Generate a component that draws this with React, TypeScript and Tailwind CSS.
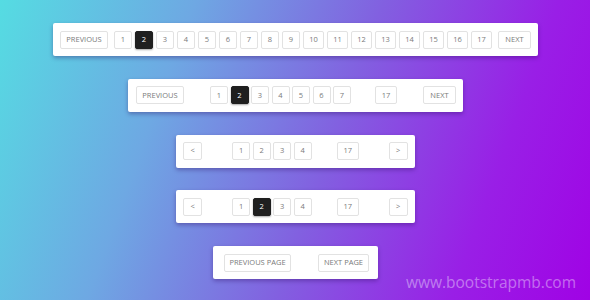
import React from 'react';

const font = { fontFamily: '"Open Sans", "Liberation Sans", sans-serif' };

function PageBtn({ label, active = false, w }: { label: string; active?: boolean; w: string }) {
  return (
    <button
      className={
        'h-[18px] shrink-0 flex items-center justify-center rounded-[2px] border text-[7.5px] leading-none ' +
        w +
        (active
          ? ' bg-[#1f1f1f] border-[#1f1f1f] text-white shadow-[0_1px_2px_rgba(0,0,0,0.35)]'
          : ' bg-white border-[#e2e2e2] text-[#7a7a7a]')
      }
    >
      {label}
    </button>
  );
}

function Card({ children, className = '' }: { children: React.ReactNode; className?: string }) {
  return (
    <div className={'h-[33px] flex items-center bg-white rounded-[2px] shadow-[0_2px_4px_rgba(40,0,90,0.35)] ' + className}>
      {children}
    </div>
  );
}

function num(n: number, active: number) {
  return <PageBtn key={n} label={String(n)} active={n === active} w={n > 9 ? 'w-[21px]' : 'w-[18px]'} />;
}

export default function App() {
  const all = Array.from({ length: 17 }, (_, i) => i + 1);

  return (
    <div
      className="relative w-[590px] h-[300px] overflow-hidden bg-[linear-gradient(110deg,#55dce2_0%,#6ea8e3_28%,#8260e0_55%,#991fe6_80%,#a002e5_100%)]"
      style={font}
    >
      <div className="flex flex-col items-center pt-[23px] pl-[1px] gap-[22.75px]">
        {/* full list */}
        <Card className="px-[7px]">
          <PageBtn label="PREVIOUS" w="w-[48px]" />
          <div className="ml-[6px] flex gap-[3px]">{all.map((n) => num(n, 2))}</div>
          <div className="ml-[6px]">
            <PageBtn label="NEXT" w="w-[33px]" />
          </div>
        </Card>

        {/* truncated */}
        <Card className="pl-[8px] pr-[7px]">
          <PageBtn label="PREVIOUS" w="w-[48px]" />
          <div className="ml-[26px] flex gap-[2.5px]">{all.slice(0, 7).map((n) => num(n, 2))}</div>
          <div className="ml-[24px]">
            <PageBtn label="17" w="w-[22px]" />
          </div>
          <div className="ml-[26px]">
            <PageBtn label="NEXT" w="w-[33px]" />
          </div>
        </Card>

        {/* arrows, no active */}
        <Card className="px-[7px]">
          <PageBtn label="<" w="w-[19px]" />
          <div className="ml-[30px] flex gap-[2.5px]">{all.slice(0, 4).map((n) => num(n, 0))}</div>
          <div className="ml-[25px]">
            <PageBtn label="17" w="w-[22px]" />
          </div>
          <div className="ml-[30px]">
            <PageBtn label=">" w="w-[19px]" />
          </div>
        </Card>

        {/* arrows, active */}
        <Card className="px-[7px]">
          <PageBtn label="<" w="w-[19px]" />
          <div className="ml-[30px] flex gap-[2.5px]">{all.slice(0, 4).map((n) => num(n, 2))}</div>
          <div className="ml-[25px]">
            <PageBtn label="17" w="w-[22px]" />
          </div>
          <div className="ml-[30px]">
            <PageBtn label=">" w="w-[19px]" />
          </div>
        </Card>

        {/* prev / next page */}
        <Card className="pl-[11px] pr-[9px]">
          <PageBtn label="PREVIOUS PAGE" w="w-[67px]" />
          <div className="ml-[27px]">
            <PageBtn label="NEXT PAGE" w="w-[51px]" />
          </div>
        </Card>
      </div>

      <div className="absolute right-[14px] top-[272px] text-[15.5px] leading-[21px] text-white/40">
        www.bootstrapmb.com
      </div>
    </div>
  );
}
